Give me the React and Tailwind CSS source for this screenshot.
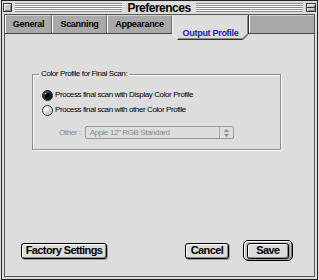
import React from 'react';

const stripes =
  'h-[9px] flex-1 bg-[repeating-linear-gradient(to_bottom,#8c8c8c_0px,#8c8c8c_1px,#ffffff_1px,#ffffff_2px)]';

const tabClass =
  'h-full flex items-center justify-center border-t border-t-[#d0d0d0] border-l border-l-white border-r border-r-[#6a6a6a] text-[9px] font-bold tracking-[-0.3px] text-black';

const Radio = ({ on }) => (
  <svg width="11" height="11" viewBox="0 0 11 11" className="shrink-0">
    <defs>
      <linearGradient id={on ? 'radOn' : 'radOff'} x1="0" y1="0" x2="1" y2="1">
        <stop offset="0" stopColor={on ? '#555' : '#ffffff'} />
        <stop offset="1" stopColor={on ? '#000' : '#b8b8b8'} />
      </linearGradient>
    </defs>
    <circle cx="5.5" cy="5.5" r="5" fill={`url(#${on ? 'radOn' : 'radOff'})`} stroke="#2a2a2a" strokeWidth="1" />
    {on ? (
      <>
        <circle cx="5.5" cy="5.5" r="2.6" fill="#000" />
        <circle cx="3.6" cy="3.6" r="0.9" fill="#bbb" />
      </>
    ) : (
      <circle cx="4.2" cy="4.2" r="1.4" fill="#fff" />
    )}
  </svg>
);

const Button = ({ children, className }) => (
  <div
    className={`h-[16px] flex items-center justify-center rounded-[3px] border border-black bg-[#dddddd] shadow-[inset_1px_1px_0_#ffffff,inset_-1px_-1px_0_#8a8a8a,1px_1px_0_#999999] text-[11px] font-bold tracking-[-0.6px] text-black ${className}`}
  >
    {children}
  </div>
);

export default function App() {
  return (
    <div className="w-[319px] h-[280px] bg-[#dddddd] px-px font-['Liberation_Sans',Arial,sans-serif] select-none">
      <div className="h-full flex flex-col border border-[#222222]">
        {/* Title bar */}
        <div className="h-[13px] flex items-center pl-[1px] pr-[1px] gap-[3px] bg-[#dddddd]">
          <div className="w-[9px] h-[9px] border border-[#333333] bg-[#c8c8c8] shadow-[inset_1px_1px_0_#ffffff,inset_-1px_-1px_0_#888888]" />
          <div className={stripes} />
          <span className="px-[2px] text-[12px] leading-[12px] font-bold tracking-[-0.5px] text-black">Preferences</span>
          <div className={stripes} />
          <div className="w-[10px] h-[9px] border border-[#333333] bg-[#c8c8c8] shadow-[inset_1px_1px_0_#ffffff,inset_-1px_-1px_0_#888888] flex items-center">
            <div className="w-full h-px bg-[#333333]" />
          </div>
        </div>

        {/* Frame */}
        <div className="flex-1 px-[2px] pb-[2px] flex flex-col">
          <div className="flex-1 flex flex-col border border-[#555555]">
            {/* Tab bar */}
            <div className="h-[19px] flex items-start bg-[#a9a9a9] border-b border-[#444444]">
              <div className={`${tabClass} w-[47px]`}>General</div>
              <div className={`${tabClass} w-[55px]`}>Scanning</div>
              <div className={`${tabClass} w-[65px]`}>Appearance</div>
              <div className="relative z-10 w-[77px] h-[25px] shrink-0">
                <svg width="77" height="25" viewBox="0 0 77 25" className="absolute inset-0">
                  <polygon points="0,0 77,0 77,19 71,24.5 6,24.5 0,19" fill="#dddddd" />
                  <polyline points="0.5,0 0.5,19 5.5,23.5" fill="none" stroke="#ffffff" strokeWidth="1" />
                  <polyline points="76.5,0 76.5,19 70.8,24.5 5.5,24.5" fill="none" stroke="#333333" strokeWidth="1" />
                  <polyline points="75.5,1 75.5,18.6 70.4,23.5 6,23.5" fill="none" stroke="#8a8a8a" strokeWidth="1" />
                </svg>
                <div className="relative pt-[14px] text-center text-[9px] leading-[9px] font-bold tracking-[-0.3px] text-[#1a1ab8]">
                  Output Profile
                </div>
              </div>
              <div className="flex-1 h-full border-t border-t-[#d0d0d0] border-l border-l-white" />
            </div>

            {/* Panel */}
            <div className="flex-1 flex flex-col bg-[#dddddd] text-[8px] tracking-[-0.4px] text-black">
              <div className="relative mt-[40px] ml-[27px] w-[249px] h-[76px] border border-[#8c8c8c] shadow-[inset_1px_1px_0_#ffffff,1px_1px_0_#ffffff] pt-[14px] pl-[9px]">
                <span className="absolute left-[6px] top-[-6px] px-[2px] bg-[#dddddd] leading-[10px]">
                  Color Profile for Final Scan:
                </span>
                <div className="flex items-center gap-[2px] h-[12px]">
                  <Radio on />
                  <span>Process final scan with Display Color Profile</span>
                </div>
                <div className="flex items-center gap-[2px] h-[12px] mt-[3px]">
                  <Radio />
                  <span>Process final scan with other Color Profile</span>
                </div>
                <div className="flex items-center mt-[10px] pl-[17px]">
                  <span className="pr-[4px] whitespace-nowrap text-[#8a8a8a]">Other :</span>
                  <div className="w-[149px] h-[13px] flex items-center rounded-[2px] border border-[#9a9a9a] bg-[#dddddd]">
                    <span className="flex-1 pl-[4px] text-[#8a8a8a]">Apple 12" RGB Standard</span>
                    <div className="w-[14px] h-full border-l border-[#aaaaaa] flex items-center justify-center">
                      <svg width="5" height="8" viewBox="0 0 5 8">
                        <polygon points="2.5,0 5,3 0,3" fill="#8a8a8a" />
                        <polygon points="0,5 5,5 2.5,8" fill="#8a8a8a" />
                      </svg>
                    </div>
                  </div>
                </div>
              </div>

              {/* Buttons */}
              <div className="mt-auto flex items-center pl-[16px] pr-[21px] pb-[15px]">
                <Button className="w-[86px]">Factory Settings</Button>
                <div className="flex-1" />
                <Button className="w-[44px]">Cancel</Button>
                <div className="ml-[14px] w-[50px] h-[21px] rounded-[5px] border border-black bg-[#c4c4c4] shadow-[inset_1px_1px_0_#ffffff,inset_-1px_-1px_0_#777777] flex items-center justify-center">
                  <Button className="w-[42px] h-[15px]">Save</Button>
                </div>
              </div>
            </div>
          </div>
        </div>
      </div>
    </div>
  );
}
